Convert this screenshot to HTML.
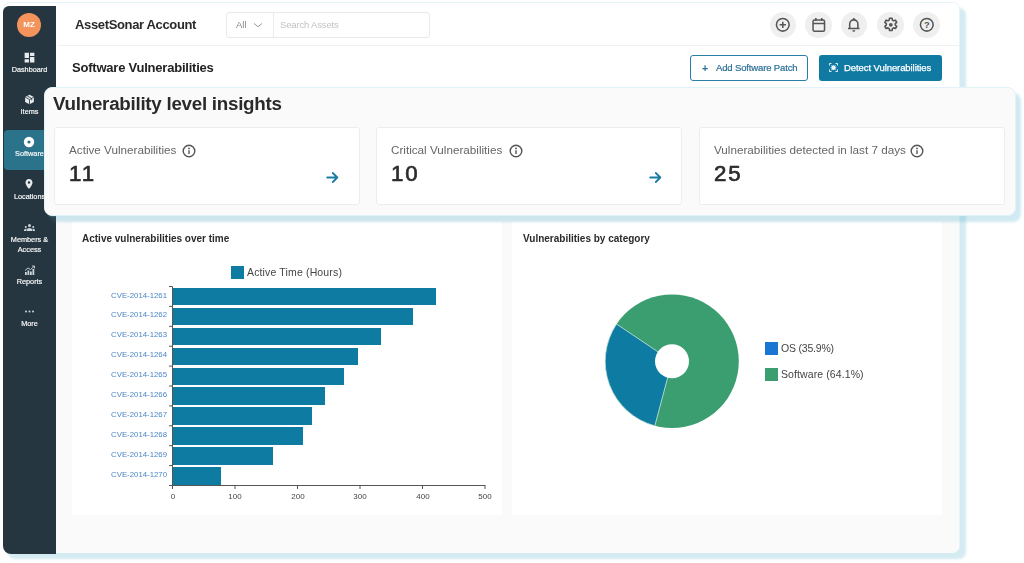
<!DOCTYPE html>
<html lang="en">
<head>
<meta charset="utf-8">
<title>AssetSonar - Software Vulnerabilities</title>
<style>
*{box-sizing:border-box;margin:0;padding:0}
html,body{width:1024px;height:563px;overflow:hidden;background:#fff}
body{position:relative;font-family:"Liberation Sans",Arial,sans-serif;color:#222}
.a{position:absolute}
.t{position:absolute;white-space:nowrap;line-height:1;will-change:transform}
.b{font-weight:bold}
/* frame */
#frame{left:3px;top:2.4px;width:957px;height:550.6px;background:#fff;border-radius:7px;
  border:1px solid #e4f4f8;box-shadow:5.5px 6px 2.5px rgba(95,182,208,.27)}
#main{left:56px;top:87px;width:903px;height:466px;background:#fafafa;border-radius:0 0 7px 0}
#side{left:3px;top:6px;width:53px;height:548px;background:#263640;border-radius:6px 0 0 8px}
#act{left:4px;top:130px;width:52px;height:40px;background:#2b738b;border-radius:4px 0 0 4px}
.sl{color:#fff;-webkit-text-stroke:.15px #fff;font-size:7.3px;text-align:center;left:3px;width:53px}
.hr{left:58px;top:45px;width:901px;height:1px;background:#f0f0f0}
#search{left:226px;top:12px;width:204px;height:26px;border:1px solid #e9e9e9;border-radius:3px;background:#fff}
#sdiv{left:273px;top:13px;width:1px;height:24px;background:#ececec}
.ic{width:26.5px;height:26.5px;border-radius:50%;background:#efefef;top:11.6px}
.btn{top:54.6px;height:26.5px;border-radius:3px}
#b1{left:690px;width:118px;border:1px solid #2a7fa5;background:#fff}
#b2{left:819.2px;width:123.2px;background:#117aa3}
/* popout */
#pop{left:44px;top:86.5px;width:972px;height:129.5px;background:#fafafa;border-radius:8px;
  border:1px solid #e2f3f8;box-shadow:5px 6px 2.5px rgba(95,182,208,.29)}
.card{top:126.8px;height:78.2px;background:#fff;border:1px solid #ededed;border-radius:3px}
.lab{color:#666;font-size:11.7px}
.num{color:#2b2b2b;font-size:22.3px;letter-spacing:1.9px;margin-top:1px;-webkit-text-stroke:.65px #2b2b2b}
.panel{top:222px;height:292.5px;background:#fff}
.cve{color:#4a86c5;font-size:7.8px;text-align:right;width:70px;left:96.8px;margin-top:-1.4px}
.bar{left:172.5px;height:17.6px;background:#0e7ba3}
.tk{color:#444;font-size:8px;width:30px;text-align:center;top:492.5px}
</style>
</head>
<body>
<div id="frame" class="a"></div>
<div id="main" class="a"></div>
<div id="side" class="a"></div>
<div id="act" class="a"></div>


<!-- sidebar -->
<div class="a" style="left:16.8px;top:12.8px;width:24px;height:24px;border-radius:50%;background:#f4935c"></div>
<div class="t b" id="t_mz" style="left:16.8px;width:24px;text-align:center;top:20.8px;font-size:8px;color:#fff">MZ</div>
<svg class="a" style="left:22.8px;top:50.7px" width="13" height="13" viewBox="0 0 24 24"><path fill="#e8ecee" d="M3 13h8V3H3v10zm0 8h8v-6H3v6zm10 0h8V11h-8v10zm0-18v6h8V3h-8z"/></svg>
<div class="t sl" id="s1" style="top:65.5px">Dashboard</div>
<svg class="a" style="left:23.5px;top:93.5px" width="11" height="11" viewBox="0 0 24 24"><path fill="#e8ecee" d="M12 1.5 21.5 6.8v10.4L12 22.5 2.500 17.200V6.800z"/><path fill="none" stroke="#263640" stroke-width="1.8" d="M2.500 6.800 12 12.200l9.500-5.400M12 12.200V22.500M7 4.300l9.800 5.500v4"/></svg>
<div class="t sl" id="s2" style="top:107.500px">Items</div>
<svg class="a" style="left:23px;top:135.500px" width="12" height="12" viewBox="0 0 12 12"><circle cx="6" cy="6" r="3.4" fill="none" stroke="#fff" stroke-width="3.6"/></svg>
<div class="t sl" id="s3" style="top:150px">Software</div>
<svg class="a" style="left:23px;top:178px" width="12" height="12" viewBox="0 0 24 24"><path fill="#e8ecee" d="M12 2C8.130 2 5 5.130 5 9c0 5.250 7 13 7 13s7-7.750 7-13c0-3.870-3.130-7-7-7zm0 9.500a2.500 2.500 0 010-5 2.500 2.500 0 010 5z"/></svg>
<div class="t sl" id="s4" style="top:193px">Locations</div>
<svg class="a" style="left:24px;top:223px" width="11" height="9" viewBox="0 0 22 18"><g fill="#cfd6da"><circle cx="11" cy="5" r="3"/><path d="M5 16c0-4 2.500-6 6-6s6 2 6 6z"/><circle cx="3.500" cy="8" r="2"/><circle cx="18.500" cy="8" r="2"/><path d="M0 16c0-3 1.500-4.500 3.500-4.500.800 0 1.500.300 2 .700-1 1-1.500 2.300-1.500 3.800zM22 16c0-3-1.500-4.500-3.500-4.500-.800 0-1.500.300-2 .700 1 1 1.500 2.300 1.500 3.800z"/></g></svg>
<div class="t sl" id="s5" style="top:235.500px">Members &amp;</div>
<div class="t sl" id="s6" style="top:245.800px">Access</div>
<svg class="a" style="left:24px;top:265px" width="11" height="11" viewBox="0 0 22 22"><g fill="#cfd6da"><rect x="2" y="14" width="3.500" height="6"/><rect x="7" y="11" width="3.500" height="9"/><rect x="12" y="13" width="3.500" height="7"/><rect x="17" y="8" width="3.500" height="12"/></g><path d="M2 11 8 6l5 3 7-6" fill="none" stroke="#cfd6da" stroke-width="1.800"/><path d="M16 2h5v5" fill="none" stroke="#cfd6da" stroke-width="1.800"/></svg>
<div class="t sl" id="s7" style="top:277.500px">Reports</div>
<svg class="a" style="left:24px;top:309.500px" width="11" height="3" viewBox="0 0 11 3"><g fill="#cfd6da"><circle cx="2" cy="1.500" r="1"/><circle cx="5.500" cy="1.500" r="1"/><circle cx="9" cy="1.500" r="1"/></g></svg>
<div class="t sl" id="s8" style="top:320px">More</div>

<!-- header -->
<div class="t b" id="t_acc" style="left:75px;top:17.9px;font-size:13px;letter-spacing:-.35px;color:#2a2a2a">AssetSonar Account</div>
<div id="search" class="a"></div><div id="sdiv" class="a"></div>
<div class="t" id="t_all" style="left:236.3px;top:19.8px;font-size:9.5px;color:#8a8a8a">All</div>
<svg class="a" style="left:253px;top:20.5px" width="10" height="8" viewBox="0 0 10 8"><path d="M1 2.500 L5 5.700 L9 2.500" fill="none" stroke="#999" stroke-width="1"/></svg>
<div class="t" id="t_srch" style="left:280.3px;top:19.8px;font-size:9.5px;letter-spacing:-.16px;color:#c2c2c2">Search Assets</div>
<div class="a hr"></div>
<div class="a ic" style="left:769.7px"></div>
<div class="a ic" style="left:805.2px"></div>
<div class="a ic" style="left:840.7px"></div>
<div class="a ic" style="left:877.2px"></div>
<div class="a ic" style="left:913px"></div>


<!-- header icons -->
<svg class="a" style="left:774.2px;top:16.05px" width="17.6" height="17.6" viewBox="0 0 15 15"><circle cx="7.500" cy="7.500" r="5.400" fill="none" stroke="#555" stroke-width="1.300"/><path d="M7.500 4.800v5.400M4.800 7.500h5.400" stroke="#555" stroke-width="1.300" fill="none"/></svg>
<svg class="a" style="left:809.7px;top:16.05px" width="17.6" height="17.6" viewBox="0 0 15 15"><rect x="2.600" y="3.400" width="9.800" height="9.600" rx="1.200" fill="none" stroke="#555" stroke-width="1.300"/><path d="M2.600 6.300h9.800M5 1.800v2.400M10 1.800v2.400" stroke="#555" stroke-width="1.300" fill="none"/></svg>
<svg class="a" style="left:845.2px;top:16.05px" width="17.6" height="17.6" viewBox="0 0 15 15"><path d="M4 10.500V6.800a3.500 3.500 0 017 0v3.700M2.600 10.600h9.800" fill="none" stroke="#555" stroke-width="1.300"/><path d="M7.500 1.600v1.600" stroke="#555" stroke-width="1.300"/><path d="M6.200 12.200a1.300 1.300 0 002.600 0z" fill="#555"/></svg>
<svg class="a" style="left:881.6px;top:16.05px" width="17.6" height="17.6" viewBox="0 0 24 24"><path fill="none" stroke="#555" stroke-width="2.200" stroke-linejoin="round" d="M10.300 3h3.400l.5 2.600 1.700 1 2.500-.9 1.700 3-2 1.700v2l2 1.700-1.700 3-2.500-.9-1.700 1-.5 2.600h-3.400l-.5-2.600-1.700-1-2.500.9-1.700-3 2-1.700v-2l-2-1.700 1.700-3 2.500.9 1.700-1z"/><circle cx="12" cy="12" r="2.600" fill="#555"/></svg>
<svg class="a" style="left:917.5px;top:16.05px" width="17.6" height="17.6" viewBox="0 0 15 15"><circle cx="7.500" cy="7.500" r="5.400" fill="none" stroke="#555" stroke-width="1.300"/><text x="7.500" y="10.400" text-anchor="middle" font-family="Liberation Sans, Arial, sans-serif" font-size="8" font-weight="bold" fill="#555">?</text></svg>

<!-- sub header -->
<div class="t b" id="t_sv" style="left:72px;top:60.6px;font-size:13px;letter-spacing:-.22px;color:#222">Software Vulnerabilities</div>
<div id="b1" class="a btn"></div>
<div id="b2" class="a btn"></div>
<div class="t b" style="left:702.3px;top:62.6px;font-size:10.5px;color:#2a6f97">+</div>
<div class="t" id="t_b1" style="left:715.8px;top:63.2px;-webkit-text-stroke:.2px #2a6f97;font-size:9.5px;letter-spacing:-.14px;color:#2a6f97">Add Software Patch</div>
<div class="t" id="t_b2" style="left:844px;top:63.2px;-webkit-text-stroke:.25px #fff;font-size:9.5px;letter-spacing:-.08px;color:#fff">Detect Vulnerabilities</div>

<svg class="a" style="left:829.3px;top:63.2px" width="9" height="9" viewBox="0 0 10 10" opacity=".92"><path d="M.500 2.800V.500H2.800M7.200 .500h2.300V2.800M9.500 7.200v2.300H7.200M2.800 9.500H.500V7.200" fill="none" stroke="#fff" stroke-width="1.100"/><ellipse cx="5" cy="5.200" rx="2.300" ry="2.700" fill="#fff"/><path d="M1.800 5.200h6.400M2.400 2.800l5.200 5M7.600 2.800l-5.200 5" stroke="#fff" stroke-width=".8"/></svg>

<!-- panels bg -->
<div class="a panel" style="left:72px;width:430px"></div>
<div class="a panel" style="left:512px;width:430px"></div>
<!-- popout -->
<div id="pop" class="a"></div>
<div class="t b" id="t_title" style="left:53.4px;top:95.1px;font-size:18.8px;letter-spacing:-.27px;color:#2a2a2a">Vulnerability level insights</div>
<div class="a card" style="left:53.5px;width:306px"></div>
<div class="a card" style="left:376px;width:306px"></div>
<div class="a card" style="left:698.5px;width:306.5px"></div>
<div class="t lab" id="t_l1" style="left:69px;top:143.8px">Active Vulnerabilities</div>
<div class="t lab" id="t_l2" style="left:390.5px;top:143.8px">Critical Vulnerabilities</div>
<div class="t lab" id="t_l3" style="left:714px;top:143.8px">Vulnerabilities detected in last 7 days</div>
<div class="t num" id="t_n1" style="left:68.5px;top:161.5px">11</div>
<div class="t num" id="t_n2" style="left:390.5px;top:161.5px">10</div>
<div class="t num" id="t_n3" style="left:713.5px;top:161.5px">25</div>

<svg class="a" style="left:182.1px;top:143.6px" width="14" height="14" viewBox="0 0 13 13"><circle cx="6.500" cy="6.500" r="5.400" fill="none" stroke="#555" stroke-width="1.300"/><path d="M6.500 5.800v3.400" stroke="#555" stroke-width="1.300"/><circle cx="6.500" cy="4.100" r=".85" fill="#555"/></svg>
<svg class="a" style="left:508.9px;top:143.6px" width="14" height="14" viewBox="0 0 13 13"><circle cx="6.500" cy="6.500" r="5.400" fill="none" stroke="#555" stroke-width="1.300"/><path d="M6.500 5.800v3.400" stroke="#555" stroke-width="1.300"/><circle cx="6.500" cy="4.100" r=".85" fill="#555"/></svg>
<svg class="a" style="left:910.4px;top:143.6px" width="14" height="14" viewBox="0 0 13 13"><circle cx="6.500" cy="6.500" r="5.400" fill="none" stroke="#555" stroke-width="1.300"/><path d="M6.500 5.800v3.400" stroke="#555" stroke-width="1.300"/><circle cx="6.500" cy="4.100" r=".85" fill="#555"/></svg>
<svg class="a" style="left:326px;top:171px" width="13" height="13" viewBox="0 0 13 13"><path d="M1.200 6.500h10M6.800 2l4.500 4.500L6.800 11" fill="none" stroke="#1a7ca3" stroke-width="1.800" stroke-linecap="round" stroke-linejoin="round"/></svg>
<svg class="a" style="left:648.5px;top:171px" width="13" height="13" viewBox="0 0 13 13"><path d="M1.200 6.500h10M6.800 2l4.500 4.500L6.800 11" fill="none" stroke="#1a7ca3" stroke-width="1.800" stroke-linecap="round" stroke-linejoin="round"/></svg>

<!-- panels -->
<div class="t b" id="t_p1" style="left:82px;top:233.5px;font-size:10px;color:#2a2a2a">Active vulnerabilities over time</div>
<div class="t b" id="t_p2" style="left:523px;top:233.5px;font-size:10px;color:#2a2a2a">Vulnerabilities by category</div>

<!-- bar chart -->
<div class="a" style="left:230.5px;top:266px;width:13px;height:13px;background:#0e7ba3"></div>
<div class="t" id="t_leg" style="left:247px;top:267px;font-size:10.5px;letter-spacing:.15px;color:#444">Active Time (Hours)</div>
<div class="a bar" style="top:287.9px;width:263.0px"></div><div class="t cve" style="top:292.9px">CVE-2014-1261</div>
<div class="a bar" style="top:307.8px;width:240.5px"></div><div class="t cve" style="top:312.8px">CVE-2014-1262</div>
<div class="a bar" style="top:327.7px;width:208.5px"></div><div class="t cve" style="top:332.7px">CVE-2014-1263</div>
<div class="a bar" style="top:347.6px;width:185.5px"></div><div class="t cve" style="top:352.6px">CVE-2014-1264</div>
<div class="a bar" style="top:367.5px;width:171.5px"></div><div class="t cve" style="top:372.5px">CVE-2014-1265</div>
<div class="a bar" style="top:387.4px;width:152.8px"></div><div class="t cve" style="top:392.4px">CVE-2014-1266</div>
<div class="a bar" style="top:407.3px;width:139.7px"></div><div class="t cve" style="top:412.3px">CVE-2014-1267</div>
<div class="a bar" style="top:427.2px;width:130.1px"></div><div class="t cve" style="top:432.2px">CVE-2014-1268</div>
<div class="a bar" style="top:447.1px;width:100.3px"></div><div class="t cve" style="top:452.1px">CVE-2014-1269</div>
<div class="a bar" style="top:467.0px;width:48.2px"></div><div class="t cve" style="top:472.0px">CVE-2014-1270</div>
<svg class="a" style="left:160px;top:280px" width="340" height="215" viewBox="160 280 340 215"><g stroke="#555" stroke-width="1" fill="none"><path d="M172.500 286.500V486"/><path d="M169 485.500H485.500"/><path d="M169 286.5h3.500"/><path d="M169 306.4h3.500"/><path d="M169 326.3h3.500"/><path d="M169 346.2h3.500"/><path d="M169 366.1h3.500"/><path d="M169 386.0h3.500"/><path d="M169 405.9h3.500"/><path d="M169 425.8h3.500"/><path d="M169 445.7h3.500"/><path d="M169 465.6h3.500"/><path d="M169 485.5h3.500"/><path d="M172.5 485.500v3.500"/><path d="M235.0 485.500v3.500"/><path d="M297.5 485.500v3.500"/><path d="M360.0 485.500v3.500"/><path d="M422.5 485.500v3.500"/><path d="M485.0 485.500v3.500"/></g></svg>
<div class="t tk" style="left:157.5px">0</div><div class="t tk" style="left:220.0px">100</div><div class="t tk" style="left:282.5px">200</div><div class="t tk" style="left:345.0px">300</div><div class="t tk" style="left:407.5px">400</div><div class="t tk" style="left:470.0px">500</div>
<!-- donut -->
<svg class="a" style="left:600px;top:290px" width="145" height="145" viewBox="600 290 145 145"><circle cx="672" cy="361.3" r="66.8" fill="#3a9e70"/><path d="M672 361.3 L654.82 425.85 A66.8 66.8 0 0 1 616.56 324.04 Z" fill="#0e7ba3" stroke="#cfe8e0" stroke-width=".8"/><circle cx="672" cy="361.3" r="17" fill="#fff"/></svg>
<div class="a" style="left:764.500px;top:341.500px;width:13px;height:13px;background:#1a76d2"></div>
<div class="a" style="left:764.500px;top:368.200px;width:13px;height:13px;background:#3a9e70"></div>
<div class="t" id="t_os" style="left:781.300px;top:342.500px;font-size:10.500px;letter-spacing:-.2px;color:#444">OS (35.9%)</div>
<div class="t" id="t_sw" style="left:781.300px;top:369.200px;font-size:10.500px;letter-spacing:.1px;color:#444">Software (64.1%)</div>
<div class="a" style="left:46px;top:216.5px;width:10px;height:8px;background:rgba(38,54,64,.55)"></div>
</body>
</html>
